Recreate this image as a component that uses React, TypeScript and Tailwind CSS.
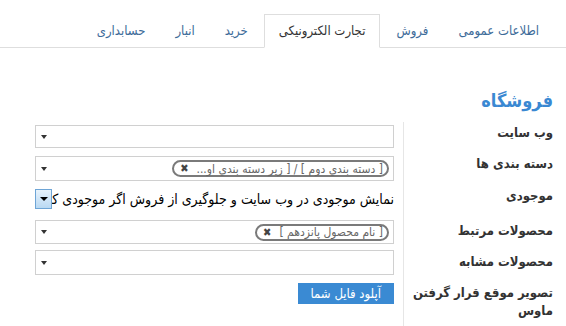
import React from 'react';

const tabs = [
  { label: 'اطلاعات عمومی', active: false },
  { label: 'فروش', active: false },
  { label: 'تجارت الکترونیکی', active: true },
  { label: 'خرید', active: false },
  { label: 'انبار', active: false },
  { label: 'حسابداری', active: false },
];

const Caret = () => (
  <span className="absolute left-[5px] top-1/2 -translate-y-1/2 w-0 h-0 border-l-[3px] border-r-[3px] border-t-[4px] border-l-transparent border-r-transparent border-t-[#333]" />
);

const Tag: React.FC<{ text: string }> = ({ text }) => (
  <span className="flex items-center h-[17px] border-2 border-[#7a7a7a] rounded-full pr-[4px] pl-[6px] text-[12px] text-[#666] leading-none whitespace-nowrap">
    <span>{text}</span>
    <span className="mr-[8px] text-[#444] font-bold text-[11px]">✖</span>
  </span>
);

const Row: React.FC<{
  h: number;
  labelPt: string;
  label: React.ReactNode;
  fieldPt: string;
  children?: React.ReactNode;
}> = ({ label, labelPt, fieldPt, children, h }) => (
  <div className="flex" style={{ height: h }}>
    <div className={`w-[150px] shrink-0 border-l border-[#e6e6e6] text-right text-[13px] font-bold text-[#333] leading-[18px] ${labelPt}`}>
      {label}
    </div>
    <div className={`mr-[9px] w-[359px] ${fieldPt}`}>{children}</div>
  </div>
);

export default function App() {
  return (
    <div dir="rtl" className="w-[566px] h-[326px] overflow-hidden bg-white font-['DejaVu_Sans_Condensed','DejaVu_Sans',sans-serif]">
      <div className="flex items-end h-[48px] border-b border-[#dedede] pr-[13px]">
        {tabs.map((t) => (
          <div
            key={t.label}
            className={
              t.active
                ? 'h-[34px] -mb-px px-[14px] ml-[2px] flex items-center text-[13px] text-[#333] bg-white border border-[#dedede] border-b-white'
                : 'h-[33px] px-[14px] ml-[2px] flex items-center text-[13px] text-[#3d6b99]'
            }
          >
            {t.label}
          </div>
        ))}
      </div>

      <div className="h-[74px] pr-[13px] pt-[41px]">
        <div className="text-[18px] font-bold text-[#3a88d2] leading-[24px]">فروشگاه</div>
      </div>

      <div className="pr-[13px]">
        <Row h={30} labelPt="pt-[2px]" label="وب سایت" fieldPt="pt-[3px]">
          <div className="relative h-[23px] border border-[#d0d0d0] bg-white">
            <Caret />
          </div>
        </Row>
        <Row h={31} labelPt="pt-[3px]" label="دسته بندی ها" fieldPt="pt-[4px]">
          <div className="relative h-[25px] border border-[#d0d0d0] bg-white flex items-center pr-[4px]">
            <Tag text="[ دسته بندي دوم ] / [ زیر دسته بندي او..." />
            <Caret />
          </div>
        </Row>
        <Row h={32} labelPt="pt-[4px]" label="موجودی" fieldPt="pt-[3px]">
          <div className="flex items-center h-[26px] bg-white">
            <div className="flex-1 overflow-hidden whitespace-nowrap text-[14px] text-black leading-[26px]">
              نمایش موجودی در وب سایت و جلوگیری از فروش اگر موجودی کافی نباشد
            </div>
            <div className="w-[17px] h-[20px] shrink-0 border border-[#6ea5d6] bg-gradient-to-b from-[#e8f3fc] to-[#b9d9f3] flex items-center justify-center">
              <span className="w-0 h-0 border-l-[4px] border-r-[4px] border-t-[4px] border-l-transparent border-r-transparent border-t-black" />
            </div>
          </div>
        </Row>
        <Row h={32} labelPt="pt-[7px]" label="محصولات مرتبط" fieldPt="pt-[5px]">
          <div className="relative h-[24px] border border-[#d0d0d0] bg-white flex items-center pr-[4px]">
            <Tag text="[ نام محصول پانزدهم ]" />
            <Caret />
          </div>
        </Row>
        <Row h={31} labelPt="pt-[6px]" label="محصولات مشابه" fieldPt="pt-[3px]">
          <div className="relative h-[25px] border border-[#d0d0d0] bg-white">
            <Caret />
          </div>
        </Row>
        <Row
          h={50}
          labelPt="pt-[6px]"
          label={
            <>
              تصویر موقع قرار گرفتن
              <br />
              ماوس
            </>
          }
          fieldPt="pt-[3px]"
        >
          <button className="h-[21px] px-[13px] bg-[#3a8ad3] text-white text-[13px] leading-[21px]">
            آپلود فایل شما
          </button>
        </Row>
      </div>
    </div>
  );
}
